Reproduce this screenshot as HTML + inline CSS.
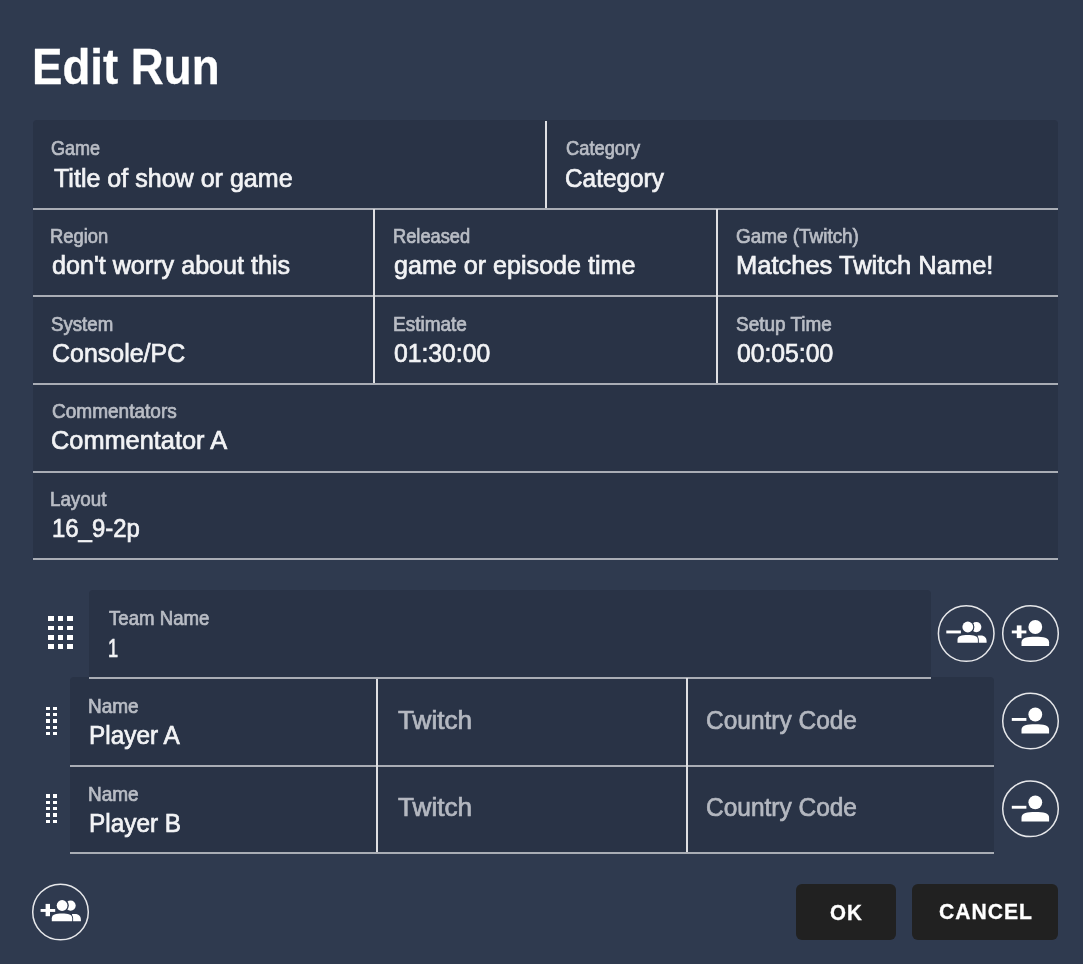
<!DOCTYPE html>
<html><head><meta charset="utf-8"><style>
html,body{margin:0;padding:0;}
body{width:1083px;height:964px;background:#2f3a4f;position:relative;overflow:hidden;font-family:"Liberation Sans",sans-serif;}
.t{position:absolute;white-space:nowrap;line-height:1;transform-origin:0 0;-webkit-text-stroke:0.7px currentColor;}
.r{position:absolute;}
#w{position:absolute;left:0;top:0;width:1083px;height:964px;filter:blur(0.45px);}
</style></head><body><div id="w">
<div class="r" style="left:32.60px;top:120.40px;width:1025.80px;height:439.10px;background:#293346;border-radius:4px 4px 0 0"></div><div class="r" style="left:32.60px;top:207.60px;width:1025.80px;height:2.00px;background:#a9adb5;"></div><div class="r" style="left:32.60px;top:295.27px;width:1025.80px;height:2.00px;background:#a9adb5;"></div><div class="r" style="left:32.60px;top:382.94px;width:1025.80px;height:2.00px;background:#a9adb5;"></div><div class="r" style="left:32.60px;top:470.61px;width:1025.80px;height:2.00px;background:#a9adb5;"></div><div class="r" style="left:32.60px;top:558.28px;width:1025.80px;height:2.00px;background:#a9adb5;"></div><div class="r" style="left:545.20px;top:121.00px;width:2.00px;height:86.60px;background:#dfe0e3;"></div><div class="r" style="left:373.00px;top:209.20px;width:2.00px;height:173.80px;background:#dfe0e3;"></div><div class="r" style="left:715.90px;top:209.20px;width:2.00px;height:173.80px;background:#dfe0e3;"></div><div class="r" style="left:88.50px;top:589.80px;width:842.00px;height:89.10px;background:#293346;border-radius:4px 4px 0 0"></div><div class="r" style="left:69.80px;top:677.30px;width:924.20px;height:176.60px;background:#293346;border-radius:4px 4px 0 0"></div><div class="r" style="left:69.80px;top:764.60px;width:924.20px;height:2.00px;background:#a9adb5;"></div><div class="r" style="left:69.80px;top:852.20px;width:924.20px;height:2.00px;background:#a9adb5;"></div><div class="r" style="left:376.20px;top:678.00px;width:2.00px;height:174.40px;background:#dfe0e3;"></div><div class="r" style="left:88.50px;top:677.10px;width:842.00px;height:2.00px;background:#a9adb5;"></div><div class="r" style="left:686.00px;top:678.00px;width:2.00px;height:174.40px;background:#dfe0e3;"></div><div class="r" style="left:796.00px;top:884.00px;width:100.00px;height:56.00px;background:#212121;border-radius:6px"></div><div class="r" style="left:912.00px;top:884.00px;width:146.30px;height:56.00px;background:#212121;border-radius:6px"></div><svg class="r" style="left:936px;top:603px" width="60" height="60" viewBox="-30.20 -30.50 60 60"><circle cx="0" cy="0" r="27.8" fill="none" stroke="#e6e7ea" stroke-width="1.5"/><g fill="#fff"><circle cx="10.1" cy="-6.4" r="5.1"/><path d="M11.5,9.3 L11.5,2.0 L14.5,2.0 C18.5,2.0 20.4,4.5 20.4,8.0 L20.4,9.3 Z"/></g><circle cx="1.6" cy="-6.5" r="6.6" fill="#2f3a4f"/><circle cx="1.6" cy="-6.5" r="6.3" fill="#2f3a4f"/><path d="M-9.6,10.3 L-9.6,6.38 C-9.6,1.48 -5.159999999999999,0.5 1.5,0.5 C8.16,0.5 12.6,1.48 12.6,6.38 L12.6,10.3 Z" fill="#2f3a4f"/><circle cx="1.6" cy="-6.5" r="5.4" fill="#fff"/><path d="M-8.7,9.3 L-8.7,6.140000000000001 C-8.7,2.19 -4.619999999999999,1.4 1.5,1.4 C7.619999999999999,1.4 11.7,2.19 11.7,6.140000000000001 L11.7,9.3 Z" fill="#fff"/><rect x="-19.9" y="-3" width="14.6" height="2.9" fill="#fff"/></svg><svg class="r" style="left:1000px;top:603px" width="60" height="60" viewBox="-30.50 -30.50 60 60"><circle cx="0" cy="0" r="27.8" fill="none" stroke="#e6e7ea" stroke-width="1.5"/><circle cx="4.8" cy="-6.5" r="6.9" fill="#fff"/><path d="M-9,12.6 L-9,8.84 C-9,4.140000000000001 -3.4799999999999995,3.2 4.800000000000001,3.2 C13.080000000000002,3.2 18.6,4.140000000000001 18.6,8.84 L18.6,12.6 Z" fill="#fff"/><rect x="-18.7" y="-3" width="14.6" height="2.9" fill="#fff"/><rect x="-13.7" y="-8.1" width="4.7" height="12.7" fill="#fff"/></svg><svg class="r" style="left:1000px;top:691px" width="60" height="60" viewBox="-30.50 -30.00 60 60"><circle cx="0" cy="0" r="27.8" fill="none" stroke="#e6e7ea" stroke-width="1.5"/><circle cx="4.8" cy="-6.5" r="6.9" fill="#fff"/><path d="M-9,12.6 L-9,8.84 C-9,4.140000000000001 -3.4799999999999995,3.2 4.800000000000001,3.2 C13.080000000000002,3.2 18.6,4.140000000000001 18.6,8.84 L18.6,12.6 Z" fill="#fff"/><rect x="-18.7" y="-3" width="14.6" height="2.9" fill="#fff"/></svg><svg class="r" style="left:1000px;top:778px" width="60" height="60" viewBox="-30.50 -30.80 60 60"><circle cx="0" cy="0" r="27.8" fill="none" stroke="#e6e7ea" stroke-width="1.5"/><circle cx="4.8" cy="-6.5" r="6.9" fill="#fff"/><path d="M-9,12.6 L-9,8.84 C-9,4.140000000000001 -3.4799999999999995,3.2 4.800000000000001,3.2 C13.080000000000002,3.2 18.6,4.140000000000001 18.6,8.84 L18.6,12.6 Z" fill="#fff"/><rect x="-18.7" y="-3" width="14.6" height="2.9" fill="#fff"/></svg><svg class="r" style="left:30px;top:882px" width="60" height="60" viewBox="-30.50 -30.00 60 60"><circle cx="0" cy="0" r="27.8" fill="none" stroke="#e6e7ea" stroke-width="1.5"/><g fill="#fff"><circle cx="10.1" cy="-6.4" r="5.1"/><path d="M11.5,9.3 L11.5,2.0 L14.5,2.0 C18.5,2.0 20.4,4.5 20.4,8.0 L20.4,9.3 Z"/></g><circle cx="1.6" cy="-6.5" r="6.6" fill="#2f3a4f"/><circle cx="1.6" cy="-6.5" r="6.3" fill="#2f3a4f"/><path d="M-9.6,10.3 L-9.6,6.38 C-9.6,1.48 -5.159999999999999,0.5 1.5,0.5 C8.16,0.5 12.6,1.48 12.6,6.38 L12.6,10.3 Z" fill="#2f3a4f"/><circle cx="1.6" cy="-6.5" r="5.4" fill="#fff"/><path d="M-8.7,9.3 L-8.7,6.140000000000001 C-8.7,2.19 -4.619999999999999,1.4 1.5,1.4 C7.619999999999999,1.4 11.7,2.19 11.7,6.140000000000001 L11.7,9.3 Z" fill="#fff"/><rect x="-19.9" y="-3" width="14.6" height="2.9" fill="#fff"/><rect x="-14.9" y="-8.1" width="4.4" height="12.3" fill="#fff"/></svg><div class="r" style="left:48.16px;top:616.20px;width:5.80px;height:4.60px;background:#ffffff;"></div><div class="r" style="left:57.60px;top:616.20px;width:5.80px;height:4.60px;background:#ffffff;"></div><div class="r" style="left:67.04px;top:616.20px;width:5.80px;height:4.60px;background:#ffffff;"></div><div class="r" style="left:48.16px;top:625.60px;width:5.80px;height:4.60px;background:#ffffff;"></div><div class="r" style="left:57.60px;top:625.60px;width:5.80px;height:4.60px;background:#ffffff;"></div><div class="r" style="left:67.04px;top:625.60px;width:5.80px;height:4.60px;background:#ffffff;"></div><div class="r" style="left:48.16px;top:635.00px;width:5.80px;height:4.60px;background:#ffffff;"></div><div class="r" style="left:57.60px;top:635.00px;width:5.80px;height:4.60px;background:#ffffff;"></div><div class="r" style="left:67.04px;top:635.00px;width:5.80px;height:4.60px;background:#ffffff;"></div><div class="r" style="left:48.16px;top:644.40px;width:5.80px;height:4.60px;background:#ffffff;"></div><div class="r" style="left:57.60px;top:644.40px;width:5.80px;height:4.60px;background:#ffffff;"></div><div class="r" style="left:67.04px;top:644.40px;width:5.80px;height:4.60px;background:#ffffff;"></div><div class="r" style="left:46.00px;top:706.80px;width:4.40px;height:3.40px;background:#ffffff;"></div><div class="r" style="left:52.50px;top:706.80px;width:4.40px;height:3.40px;background:#ffffff;"></div><div class="r" style="left:46.00px;top:713.10px;width:4.40px;height:3.40px;background:#ffffff;"></div><div class="r" style="left:52.50px;top:713.10px;width:4.40px;height:3.40px;background:#ffffff;"></div><div class="r" style="left:46.00px;top:719.40px;width:4.40px;height:3.40px;background:#ffffff;"></div><div class="r" style="left:52.50px;top:719.40px;width:4.40px;height:3.40px;background:#ffffff;"></div><div class="r" style="left:46.00px;top:725.70px;width:4.40px;height:3.40px;background:#ffffff;"></div><div class="r" style="left:52.50px;top:725.70px;width:4.40px;height:3.40px;background:#ffffff;"></div><div class="r" style="left:46.00px;top:732.00px;width:4.40px;height:3.40px;background:#ffffff;"></div><div class="r" style="left:52.50px;top:732.00px;width:4.40px;height:3.40px;background:#ffffff;"></div><div class="r" style="left:46.00px;top:794.40px;width:4.40px;height:3.40px;background:#ffffff;"></div><div class="r" style="left:52.50px;top:794.40px;width:4.40px;height:3.40px;background:#ffffff;"></div><div class="r" style="left:46.00px;top:800.70px;width:4.40px;height:3.40px;background:#ffffff;"></div><div class="r" style="left:52.50px;top:800.70px;width:4.40px;height:3.40px;background:#ffffff;"></div><div class="r" style="left:46.00px;top:807.00px;width:4.40px;height:3.40px;background:#ffffff;"></div><div class="r" style="left:52.50px;top:807.00px;width:4.40px;height:3.40px;background:#ffffff;"></div><div class="r" style="left:46.00px;top:813.30px;width:4.40px;height:3.40px;background:#ffffff;"></div><div class="r" style="left:52.50px;top:813.30px;width:4.40px;height:3.40px;background:#ffffff;"></div><div class="r" style="left:46.00px;top:819.60px;width:4.40px;height:3.40px;background:#ffffff;"></div><div class="r" style="left:52.50px;top:819.60px;width:4.40px;height:3.40px;background:#ffffff;"></div>
<div class="t" style="left:31.52px;top:42.09px;font-size:49.5px;font-weight:700;color:#ffffff;transform:scaleX(0.9216878961294587);letter-spacing:0px;-webkit-text-stroke:0.3px currentColor">Edit Run</div><div class="t" style="left:51.04px;top:139.46px;font-size:19.3px;font-weight:400;color:#b9bdc5;transform:scaleX(0.9344074535436752);letter-spacing:0px;">Game</div><div class="t" style="left:53.50px;top:165.61px;font-size:25.5px;font-weight:400;color:#f2f3f5;transform:scaleX(0.9824611953217932);letter-spacing:0px;">Title of show or game</div><div class="t" style="left:565.76px;top:139.46px;font-size:19.3px;font-weight:400;color:#b9bdc5;transform:scaleX(0.9485906535850022);letter-spacing:0px;">Category</div><div class="t" style="left:565.15px;top:165.61px;font-size:25.5px;font-weight:400;color:#f2f3f5;transform:scaleX(0.9560934066344375);letter-spacing:0px;">Category</div><div class="t" style="left:50.44px;top:227.06px;font-size:19.3px;font-weight:400;color:#b9bdc5;transform:scaleX(0.952772918824026);letter-spacing:0px;">Region</div><div class="t" style="left:51.61px;top:253.21px;font-size:25.5px;font-weight:400;color:#f2f3f5;transform:scaleX(0.9858608104543367);letter-spacing:0px;">don't worry about this</div><div class="t" style="left:393.37px;top:227.06px;font-size:19.3px;font-weight:400;color:#b9bdc5;transform:scaleX(0.9468081496989661);letter-spacing:0px;">Released</div><div class="t" style="left:394.02px;top:253.21px;font-size:25.5px;font-weight:400;color:#f2f3f5;transform:scaleX(0.9846455987085363);letter-spacing:0px;">game or episode time</div><div class="t" style="left:736.14px;top:227.06px;font-size:19.3px;font-weight:400;color:#b9bdc5;transform:scaleX(0.9805181406927261);letter-spacing:0px;">Game (Twitch)</div><div class="t" style="left:736.14px;top:253.21px;font-size:25.5px;font-weight:400;color:#f2f3f5;transform:scaleX(0.9998264493981708);letter-spacing:0px;">Matches Twitch Name!</div><div class="t" style="left:50.62px;top:314.66px;font-size:19.3px;font-weight:400;color:#b9bdc5;transform:scaleX(0.9672791467207934);letter-spacing:0px;">System</div><div class="t" style="left:51.51px;top:340.81px;font-size:25.5px;font-weight:400;color:#f2f3f5;transform:scaleX(0.9792347253208148);letter-spacing:0px;">Console/PC</div><div class="t" style="left:393.30px;top:314.66px;font-size:19.3px;font-weight:400;color:#b9bdc5;transform:scaleX(0.9857490360309563);letter-spacing:0px;">Estimate</div><div class="t" style="left:393.68px;top:340.81px;font-size:25.5px;font-weight:400;color:#f2f3f5;transform:scaleX(0.9688316409307088);letter-spacing:0px;">01:30:00</div><div class="t" style="left:735.80px;top:314.66px;font-size:19.3px;font-weight:400;color:#b9bdc5;transform:scaleX(0.9822863023519666);letter-spacing:0px;">Setup Time</div><div class="t" style="left:736.82px;top:340.81px;font-size:25.5px;font-weight:400;color:#f2f3f5;transform:scaleX(0.9687531216838815);letter-spacing:0px;">00:05:00</div><div class="t" style="left:51.76px;top:402.26px;font-size:19.3px;font-weight:400;color:#b9bdc5;transform:scaleX(0.9867721008511064);letter-spacing:0px;">Commentators</div><div class="t" style="left:50.68px;top:428.41px;font-size:25.5px;font-weight:400;color:#f2f3f5;transform:scaleX(0.9938674749999517);letter-spacing:0px;">Commentator A</div><div class="t" style="left:50.32px;top:489.86px;font-size:19.3px;font-weight:400;color:#b9bdc5;transform:scaleX(0.9733082310663791);letter-spacing:0px;">Layout</div><div class="t" style="left:51.57px;top:516.01px;font-size:25.5px;font-weight:400;color:#f2f3f5;transform:scaleX(0.9374264907273222);letter-spacing:0px;">16_9-2p</div><div class="t" style="left:108.55px;top:608.86px;font-size:19.3px;font-weight:400;color:#b9bdc5;transform:scaleX(0.9658554891021849);letter-spacing:0px;">Team Name</div><div class="t" style="left:107.66px;top:635.81px;font-size:25.5px;font-weight:400;color:#f2f3f5;transform:scaleX(0.712818001729571);letter-spacing:0px;">1</div><div class="t" style="left:88.10px;top:696.96px;font-size:19.3px;font-weight:400;color:#b9bdc5;transform:scaleX(0.9854702270799293);letter-spacing:0px;">Name</div><div class="t" style="left:88.52px;top:723.21px;font-size:25.5px;font-weight:400;color:#f2f3f5;transform:scaleX(0.9556461014075707);letter-spacing:0px;">Player A</div><div class="t" style="left:397.81px;top:707.51px;font-size:25.5px;font-weight:400;color:#b4b8c0;transform:scaleX(1.0257699737897215);letter-spacing:0px;">Twitch</div><div class="t" style="left:706.32px;top:707.51px;font-size:25.5px;font-weight:400;color:#b4b8c0;transform:scaleX(0.9596398621733173);letter-spacing:0px;">Country Code</div><div class="t" style="left:88.10px;top:784.56px;font-size:19.3px;font-weight:400;color:#b9bdc5;transform:scaleX(0.9854702270799293);letter-spacing:0px;">Name</div><div class="t" style="left:88.52px;top:810.81px;font-size:25.5px;font-weight:400;color:#f2f3f5;transform:scaleX(0.9556461014075707);letter-spacing:0px;">Player B</div><div class="t" style="left:397.81px;top:795.11px;font-size:25.5px;font-weight:400;color:#b4b8c0;transform:scaleX(1.0257699737897215);letter-spacing:0px;">Twitch</div><div class="t" style="left:706.32px;top:795.11px;font-size:25.5px;font-weight:400;color:#b4b8c0;transform:scaleX(0.9596398621733173);letter-spacing:0px;">Country Code</div><div class="t" style="left:830.13px;top:902.60px;font-size:21.5px;font-weight:700;color:#ffffff;transform:scaleX(0.9552665860277895);letter-spacing:1.0px;-webkit-text-stroke:0.3px currentColor">OK</div><div class="t" style="left:938.68px;top:902.40px;font-size:21.5px;font-weight:700;color:#ffffff;transform:scaleX(0.9825251372356262);letter-spacing:1.0px;-webkit-text-stroke:0.3px currentColor">CANCEL</div>
</div></body></html>
